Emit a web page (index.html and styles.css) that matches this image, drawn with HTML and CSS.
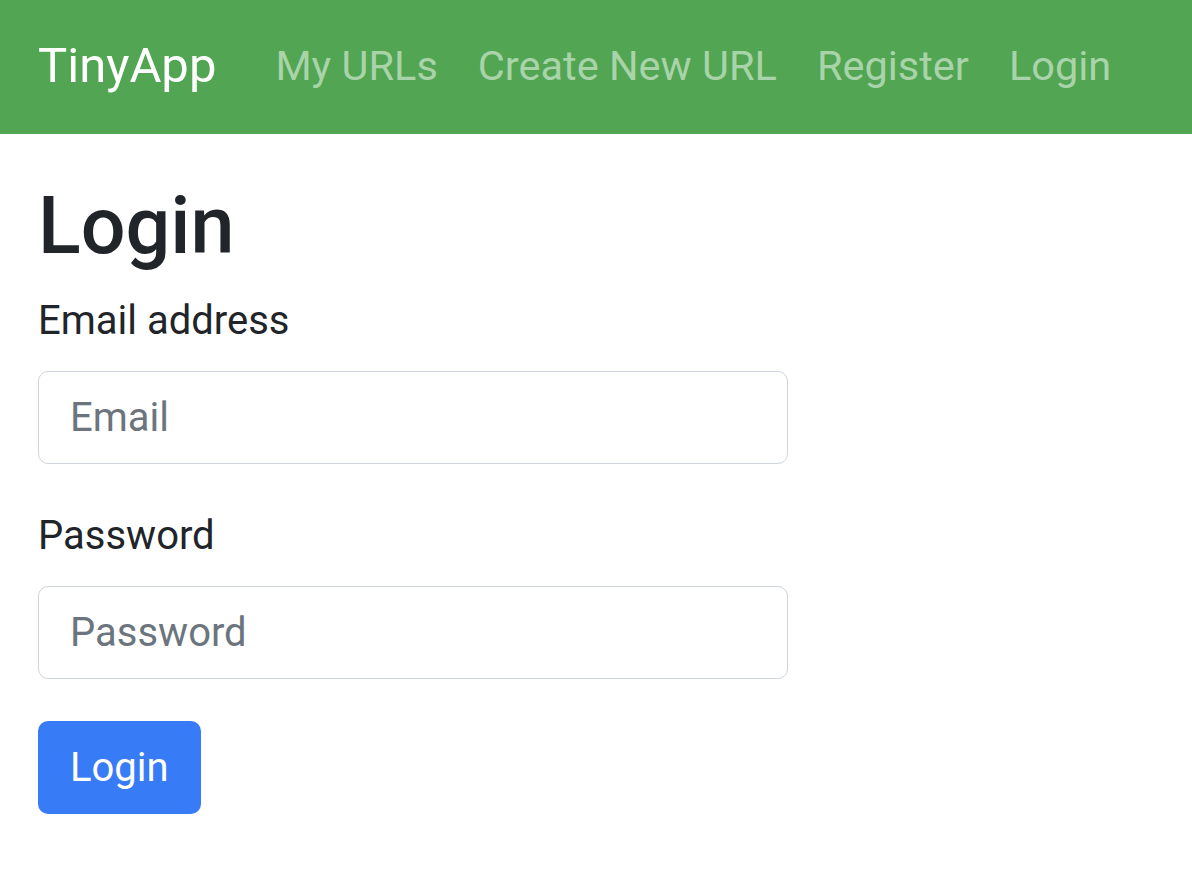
FILE: index.html
```html
<!DOCTYPE html>
<html lang="en">
<head>
<meta charset="utf-8">
<title>TinyApp - Login</title>
<link rel="stylesheet" href="styles.css">
</head>
<body>
<nav class="navbar">
  <a class="brand" href="#">TinyApp</a>
  <div class="nav-links">
    <a class="nav-link" href="#">My URLs</a>
    <a class="nav-link" href="#">Create New URL</a>
    <a class="nav-link" href="#">Register</a>
    <a class="nav-link" href="#">Login</a>
  </div>
</nav>
<main class="container">
  <h1 class="title">Login</h1>
  <form class="login-form">
    <div class="form-group">
      <label class="label" for="email">Email address</label>
      <input class="input" id="email" type="email" placeholder="Email">
    </div>
    <div class="form-group">
      <label class="label" for="password">Password</label>
      <input class="input" id="password" type="password" placeholder="Password">
    </div>
    <button class="btn" type="submit">Login</button>
  </form>
</main>
</body>
</html>
```
FILE: styles.css
```css
* { box-sizing: border-box; }
body {
  margin: 0;
  font-family: Roboto, "Noto Sans", sans-serif;
  color: #212529;
  background: #fff;
}
.navbar {
  height: 134px;
  background: #52a552;
  display: flex;
  align-items: center;
  padding: 0 38px;
  white-space: nowrap;
}
.brand {
  color: #fff;
  text-decoration: none;
  font-size: 49px;
  line-height: 1.2;
  margin-right: 39px;
  padding-bottom: 2px;
}
.nav-links {
  display: flex;
  align-items: center;
}
.nav-link {
  color: #a9d3a9;
  text-decoration: none;
  font-size: 41.5px;
  line-height: 1.2;
  padding: 0 20px 2px;
}
.container {
  padding: 45px 38px 0;
}
.title {
  margin: 0 0 17px;
  font-size: 79px;
  font-weight: 500;
  line-height: 1.2;
}
.login-form {
  width: 750px;
}
.form-group {
  margin-bottom: 42px;
}
.label {
  display: block;
  font-size: 40px;
  line-height: 1.5;
  margin-bottom: 20px;
}
.input {
  display: block;
  width: 100%;
  height: 93px;
  border: 1px solid #ced4da;
  border-radius: 10px;
  padding: 0 31px;
  font-family: inherit;
  font-size: 40px;
  color: #495057;
  background: #fff;
}
.input::placeholder {
  color: #6c757d;
  opacity: 1;
}
.btn {
  display: block;
  height: 93px;
  padding: 0 32px;
  border: 0;
  border-radius: 10px;
  background: #387bf6;
  color: #fff;
  font-family: inherit;
  font-size: 40px;
}
```
